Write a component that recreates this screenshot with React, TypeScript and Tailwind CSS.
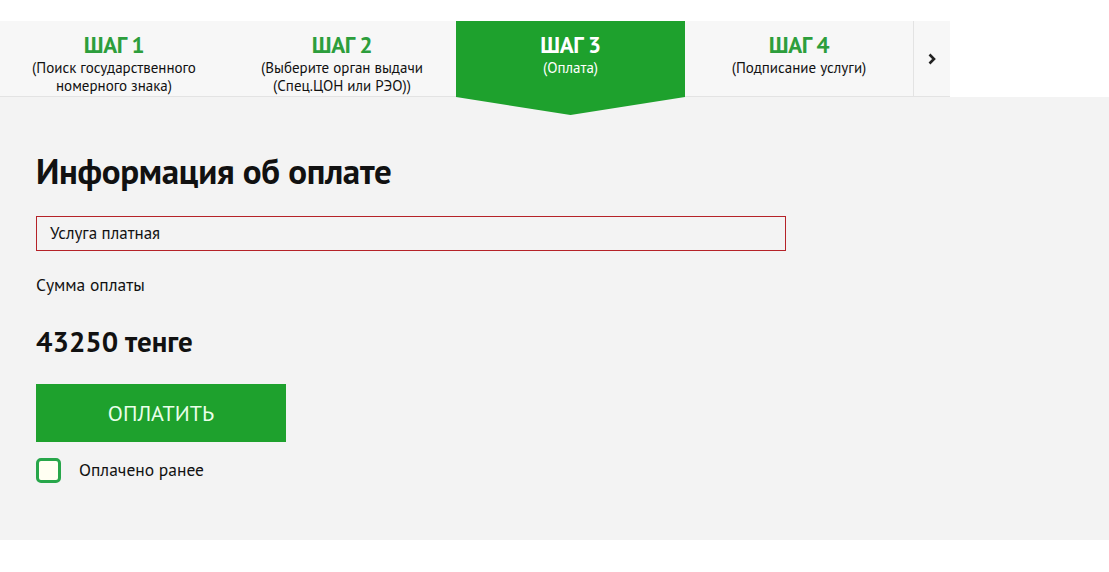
import React from "react";

const font = { fontFamily: '"PT Sans", "Open Sans", "Noto Sans", sans-serif' };

function Tab({ title, sub, active }: { title: string; sub: React.ReactNode; active?: boolean }) {
  if (active) {
    return (
      <div className="relative w-[229px] shrink-0 self-stretch">
        <div
          className="absolute left-0 top-0 w-full h-[94px] bg-[#1ea12d]"
          style={{ clipPath: "polygon(0 0, 100% 0, 100% 76px, 50% 94px, 0 76px)" }}
        />
        <div className="relative flex flex-col items-center pt-[12px] text-white">
          <div className="text-[23px] font-bold leading-[24px] tracking-[-0.3px]">{title}</div>
          <div className="mt-[2px] text-[15px] leading-[18px] text-center">{sub}</div>
        </div>
      </div>
    );
  }
  return (
    <div className="w-[228px] shrink-0 flex flex-col items-center pt-[12px]">
      <div className="text-[23px] font-bold leading-[24px] text-[#2d9e3c] tracking-[-0.3px]">{title}</div>
      <div className="mt-[2px] text-[15px] leading-[18px] text-[#111] text-center">{sub}</div>
    </div>
  );
}

export default function App() {
  return (
    <div className="w-[1109px] h-[572px] bg-white" style={font}>
      <div className="h-[21px]" />
      <div className="relative z-10 flex w-[950px] h-[76px] bg-[#f7f7f7] border-b border-[#e3e3e3]">
        <Tab title="ШАГ 1" sub={<>(Поиск государственного<br />номерного знака)</>} />
        <Tab title="ШАГ 2" sub={<>(Выберите орган выдачи<br />(Спец.ЦОН или РЭО))</>} />
        <Tab title="ШАГ 3" sub="(Оплата)" active />
        <Tab title="ШАГ 4" sub="(Подписание услуги)" />
        <div className="w-[36px] border-l border-[#e3e3e3] flex items-center justify-center">
          <svg width="10" height="12" viewBox="0 0 10 12">
            <path d="M2.5 1.5 L7 6 L2.5 10.5" fill="none" stroke="#222" strokeWidth="2.6" />
          </svg>
        </div>
      </div>
      <div className="bg-[#f3f3f3] h-[443px] pl-[36px] pt-[53px]">
        <h1 className="text-[35px] font-bold leading-[42px] text-[#111] tracking-[-0.3px]">Информация об оплате</h1>
        <div className="mt-[24px] w-[750px] h-[35px] border border-[#b52228] flex items-center pl-[13px] text-[17px] text-[#111]">
          Услуга платная
        </div>
        <div className="mt-[24px] text-[17.5px] leading-[20px] text-[#111]">Сумма оплаты</div>
        <div className="mt-[30px] text-[29px] font-bold leading-[32px] text-[#111]">43250 тенге</div>
        <button className="mt-[27px] w-[250px] h-[58px] bg-[#1ea12d] text-[#eaffea] text-[22px] flex items-center justify-center">
          ОПЛАТИТЬ
        </button>
        <div className="mt-[15px] flex items-center">
          <div className="w-[25px] h-[25px] rounded-[5px] border-[3px] border-[#27a64a] bg-[#fffff2]" />
          <span className="ml-[18px] text-[17.5px] text-[#111]">Оплачено ранее</span>
        </div>
      </div>
    </div>
  );
}
